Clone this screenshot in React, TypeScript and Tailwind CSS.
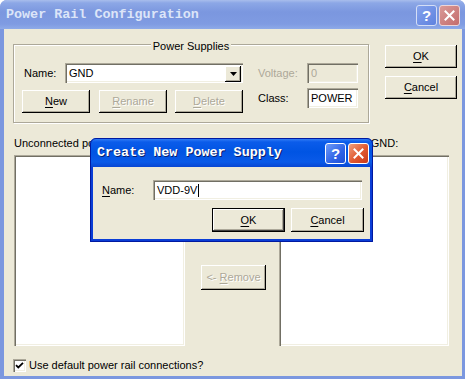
import React from "react";

const face = "bg-[#ece9d8]";
const raised = "shadow-[inset_-1px_-1px_0_#000,inset_1px_1px_0_#fff,inset_-2px_-2px_0_#aca899]";
const sunken = "shadow-[inset_1px_1px_0_#aca899,inset_2px_2px_0_#716f64,inset_-1px_-1px_0_#fff,inset_-2px_-2px_0_#f1efe2]";
const dimText = "text-[#aca899] [text-shadow:1px_1px_0_#fff]";

type BtnProps = {
  pre?: string;
  u: string;
  post?: string;
  className: string;
  disabled?: boolean;
  isDefault?: boolean;
};

function Btn({ pre = "", u, post = "", className, disabled, isDefault }: BtnProps) {
  const edge = isDefault
    ? "border border-black shadow-[inset_-1px_-1px_0_#404040,inset_1px_1px_0_#fff,inset_-2px_-2px_0_#aca899]"
    : raised;
  return (
    <div className={`${className} ${face} ${edge} flex items-center justify-center ${disabled ? dimText : "text-black"}`}>
      <span className="whitespace-pre">
        {pre}
        <span className="underline underline-offset-[2px]">{u}</span>
        {post}
      </span>
    </div>
  );
}

function Field({ className, children, disabled }: { className: string; children?: React.ReactNode; disabled?: boolean }) {
  return (
    <div className={`${className} ${sunken} ${disabled ? face : "bg-white"} flex items-center pl-[4px] pt-[1px]`}>
      {children}
    </div>
  );
}

function CaptionButtons({ active }: { active: boolean }) {
  const help = active
    ? "bg-[linear-gradient(135deg,#6f9cf8,#2f63e6_60%,#1f4fd6)] border-white"
    : "bg-[linear-gradient(135deg,#84a2ec,#5f82df)] border-[#d4def6]";
  const close = active
    ? "bg-[linear-gradient(135deg,#f0a07e,#e0572f_55%,#c9391a)] border-white"
    : "bg-[linear-gradient(135deg,#d99a98,#c46c6c)] border-[#ecd6d8]";
  return (
    <div className="flex gap-[2px]">
      <div className={`w-[21px] h-[21px] rounded-[3px] border ${help} flex items-center justify-center text-white font-bold text-[15px] leading-none font-['Liberation_Sans',sans-serif]`}>
        ?
      </div>
      <div className={`w-[21px] h-[21px] rounded-[3px] border ${close} flex items-center justify-center`}>
        <svg width="11" height="11" viewBox="0 0 11 11">
          <path d="M1.5 1.5 L9.5 9.5 M9.5 1.5 L1.5 9.5" stroke="#fff" strokeWidth="2" strokeLinecap="square" />
        </svg>
      </div>
    </div>
  );
}

function Dropdown() {
  return (
    <div className={`w-[16px] h-[16px] mr-[2px] ml-auto ${face} ${raised} flex items-center justify-center`}>
      <svg width="7" height="4" viewBox="0 0 7 4">
        <path d="M0 0 H7 L3.5 4 Z" fill="#000" />
      </svg>
    </div>
  );
}

function CreateSupplyDialog() {
  return (
    <div className="absolute left-[90px] top-[138px] w-[283px] h-[104px] flex flex-col rounded-t-[6px] overflow-hidden outline outline-1 -outline-offset-1 outline-[#0019a0]">
      <div className="h-[29px] shrink-0 flex items-start bg-[linear-gradient(to_bottom,#3d86f8_0px,#0b5cea_4px,#0054e3_14px,#0a5ae8_24px,#0846d2_29px)]">
        <div className="pl-[7px] pt-[8px] text-white font-bold text-[13.4px] leading-[14px] font-['Liberation_Mono',monospace] [text-shadow:1px_1px_0_#0a1e6e]">
          Create New Power Supply
        </div>
        <div className="ml-auto mt-[5px] mr-[4px]">
          <CaptionButtons active />
        </div>
      </div>
      <div className={`flex-1 flex flex-col ${face} border-x-[3px] border-b-[3px] border-[#0a3dd6]`}>
        <div className="mt-[13px] flex items-center">
          <div className="w-[60px] pl-[9px]">
            <span className="underline underline-offset-[2px]">N</span>ame:
          </div>
          <Field className="w-[209px] h-[20px]">
            <span>VDD-9V</span>
            <span className="w-px h-[13px] bg-black ml-[1px]" />
          </Field>
        </div>
        <div className="mt-[8px] flex justify-end gap-[6px] pr-[6px]">
          <Btn className="w-[73px] h-[24px]" u="O" post="K" isDefault />
          <Btn className="w-[73px] h-[24px]" u="C" post="ancel" />
        </div>
      </div>
    </div>
  );
}

export default function App() {
  return (
    <div className="relative w-[465px] h-[379px] flex flex-col bg-[#7b97df] rounded-t-[7px] overflow-hidden text-[11px] leading-[13px] font-['Liberation_Sans',Arial,sans-serif] text-black">
      {/* title bar (inactive) */}
      <div className="h-[29px] shrink-0 flex items-start bg-[linear-gradient(to_bottom,#a8bdec_0px,#8ca7e6_3px,#7b97df_12px,#7f9be2_24px,#8eaae8_29px)]">
        <div className="pl-[6px] pt-[8px] text-[#dce5f8] font-bold text-[13.4px] leading-[14px] font-['Liberation_Mono',monospace]">
          Power Rail Configuration
        </div>
        <div className="ml-auto mt-[5px] mr-[5px]">
          <CaptionButtons active={false} />
        </div>
      </div>

      {/* client area */}
      <div className={`flex-1 ml-[4px] mr-[3px] mb-[3px] ${face} flex flex-col`}>
        <div className="mt-[15px] ml-[9px] flex items-start">
          <div className="w-[356px] h-[79px] border border-[#aca899] shadow-[inset_1px_1px_0_#fff,1px_1px_0_#fff] flex flex-col">
            <div className={`-mt-[6px] h-[14px] leading-[14px] mx-auto px-[2px] ${face}`}>Power Supplies</div>
            <div className="mt-[10px] pl-[10px] flex items-center">
              <div className="w-[41px]">Name:</div>
              <Field className="w-[178px] h-[20px]">
                <span>GND</span>
                <Dropdown />
              </Field>
              <div className="ml-[15px] w-[49px] text-[#aca899]">Voltage:</div>
              <Field className="w-[51px] h-[20px]" disabled>
                <span className="text-[#aca899]">0</span>
              </Field>
            </div>
            <div className="mt-[5px] pl-[8px] flex items-start">
              <Btn className="mt-[2px] w-[68px] h-[23px]" u="N" post="ew" />
              <Btn className="mt-[2px] ml-[9px] w-[68px] h-[23px]" u="R" post="ename" disabled />
              <Btn className="mt-[2px] ml-[8px] w-[68px] h-[23px]" u="D" post="elete" disabled />
              <div className="ml-[15px] w-[49px] h-[20px] flex items-center">Class:</div>
              <Field className="w-[51px] h-[20px]">
                <span>POWER</span>
              </Field>
            </div>
          </div>
          <div className="ml-[16px] mt-[1px] flex flex-col gap-[8px]">
            <Btn className="w-[72px] h-[23px]" u="O" post="K" />
            <Btn className="w-[72px] h-[23px]" u="C" post="ancel" />
          </div>
        </div>

        <div className="mt-[14px] ml-[10px] flex">
          <div className="w-[265px]">Unconnected power nets:</div>
          <div>Nets connected to GND:</div>
        </div>

        <div className="mt-[5px] ml-[10px] flex h-[191px]">
          <div className={`w-[171px] bg-white ${sunken}`} />
          <div className="w-[94px] flex flex-col">
            <Btn className="mt-[110px] ml-[16px] w-[65px] h-[25px]" pre="<- " u="R" post="emove" disabled />
          </div>
          <div className={`w-[170px] bg-white ${sunken}`} />
        </div>

        <div className="mt-[13px] ml-[9px] flex items-center">
          <div className={`w-[13px] h-[13px] bg-white ${sunken} flex items-center justify-center`}>
            <svg width="9" height="9" viewBox="0 0 9 9">
              <path d="M1 4.2 L3.3 6.5 L8 1.8" stroke="#000" strokeWidth="1.8" fill="none" />
            </svg>
          </div>
          <div className="ml-[3px]">Use default power rail connections?</div>
        </div>
      </div>

      <CreateSupplyDialog />
    </div>
  );
}
